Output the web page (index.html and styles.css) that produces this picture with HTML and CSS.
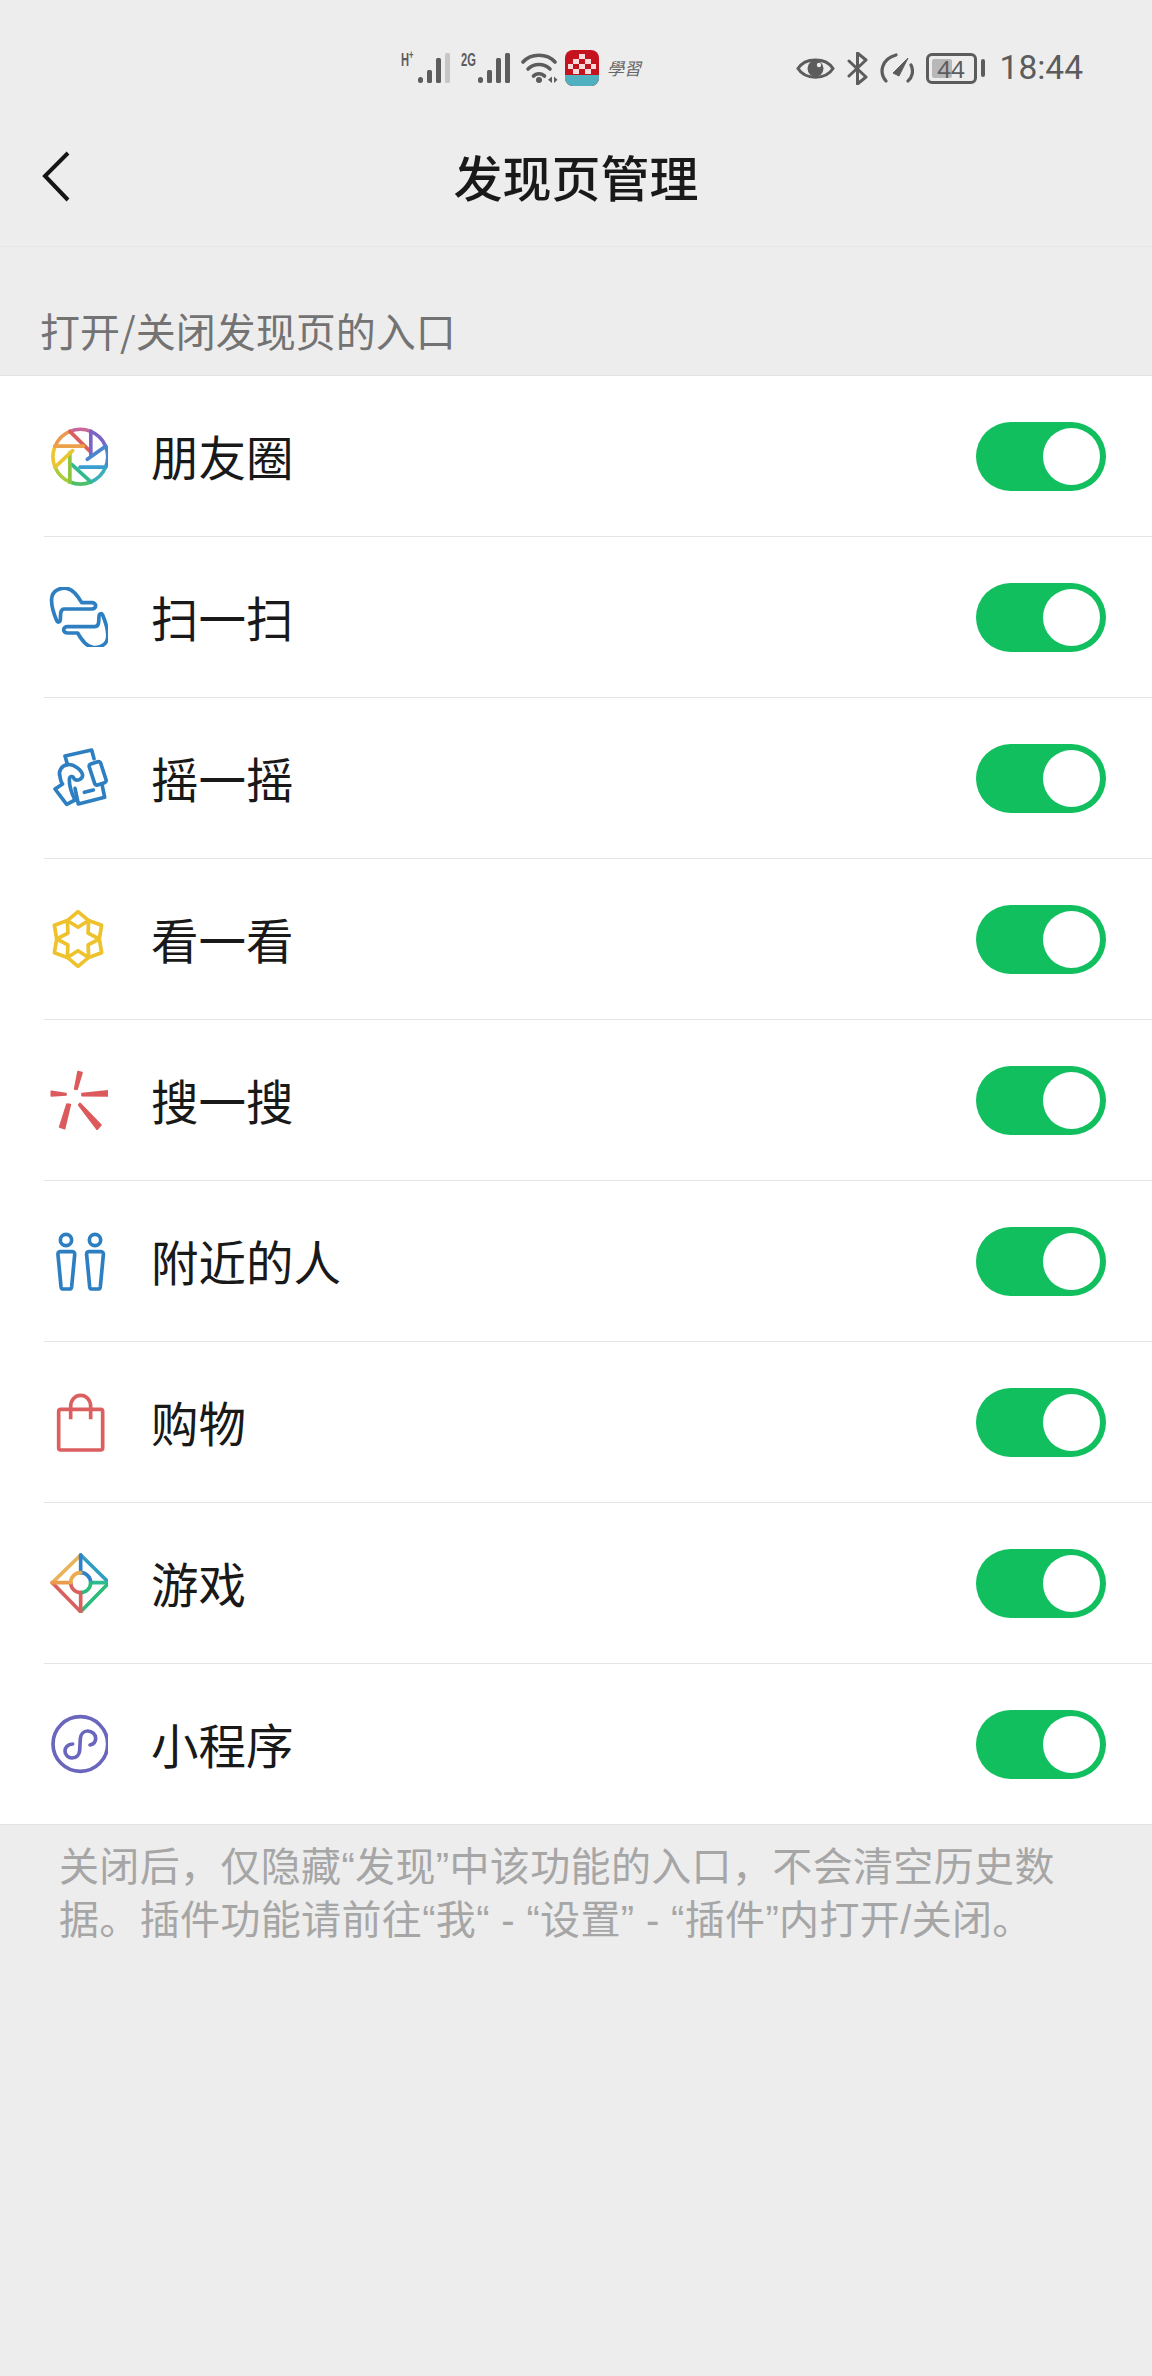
FILE: index.html
```html
<!DOCTYPE html>
<html lang="zh-CN">
<head>
    <meta charset="UTF-8">
    <meta name="viewport" content="width=device-width, initial-scale=1.0">
    <title>发现页管理</title>
    <link rel="stylesheet" href="styles.css">
</head>
<body>

<div class="status-bar">
    <div class="status-center">
        <div class="signal">
            <span class="net">H<sup>+</sup></span>
            <svg width="32" height="30" viewBox="0 0 32 30"><g fill="#5c5c5c"><rect x="0" y="24" width="5" height="6" rx="2.500"/><rect x="9" y="17" width="5" height="13" rx="1.500"/><rect x="18" y="5" width="5" height="25" rx="1.500"/></g><rect x="27" y="0" width="5" height="30" rx="1.500" fill="#c6c6c6"/></svg>
        </div>
        <div class="signal">
            <span class="net">2G</span>
            <svg width="32" height="30" viewBox="0 0 32 30"><g fill="#5c5c5c"><rect x="0" y="24" width="5" height="6" rx="2.500"/><rect x="9" y="17" width="5" height="13" rx="1.500"/><rect x="18" y="5" width="5" height="25" rx="1.500"/><rect x="27" y="0" width="5" height="30" rx="1.500"/></g></svg>
        </div>
        <svg class="wifi" width="37" height="30" viewBox="0 0 37 30"><g fill="none" stroke="#5c5c5c" stroke-width="3.600" stroke-linecap="round"><path d="M2 9C10 0 26 0 34 9"/><path d="M7 16C13 10 23 10 29 16"/><path d="M12.500 23C15 20 21 20 23.500 23"/></g><circle cx="18" cy="27" r="3" fill="#5c5c5c"/><path d="M31 23.500v6.500l-4-3.200zM33 23.500l3.500 3.300-3.500 3.200z" fill="#5c5c5c"/></svg>
        <svg class="app-badge" width="34" height="36" viewBox="0 0 34 36">
            <rect width="34" height="36" rx="8" fill="#c4121f"/>
            <path d="M0 25h34v3a8 8 0 0 1-8 8H8a8 8 0 0 1-8-8z" fill="#4fb0c0"/>
            <g fill="#f8dcdc"><rect x="14" y="4" width="6" height="5"/><rect x="8" y="9" width="6" height="5"/><rect x="20" y="9" width="6" height="5"/><rect x="3" y="14" width="5" height="5"/><rect x="14" y="14" width="6" height="5"/><rect x="26" y="14" width="5" height="5"/><rect x="8" y="19" width="6" height="5"/><rect x="20" y="19" width="6" height="5"/></g>
        </svg>
        <span class="study">學習</span>
    </div>
    <div class="status-right">
        <svg width="39" height="25" viewBox="0 0 39 25"><path d="M2 12.500C9 1 30 1 37 12.500C30 24 9 24 2 12.500Z" fill="none" stroke="#5c5c5c" stroke-width="3"/><circle cx="19.500" cy="12.500" r="8" fill="#5c5c5c"/><circle cx="23" cy="9" r="2.200" fill="#ededed"/></svg>
        <svg width="21" height="33" viewBox="0 0 21 33"><path d="M2 9L19 25L10.500 32V1L19 8L2 24" fill="none" stroke="#5c5c5c" stroke-width="3" stroke-linejoin="round" stroke-linecap="round"/></svg>
        <svg width="34" height="30" viewBox="0 0 34 30"><g fill="none" stroke="#5c5c5c" stroke-width="3.200" stroke-linecap="round"><path d="M6 28C-1 20 1 6 16 2"/><path d="M31 12C34 18 32 25 28 28"/></g><path d="M13 20L17 16L28 5L19 23Z" fill="#5c5c5c" stroke="#5c5c5c" stroke-linejoin="round"/></svg>
        <div class="battery">
            <div class="battery-body"><div class="battery-level"></div><span class="battery-num">44</span></div>
            <div class="battery-cap"></div>
        </div>
        <span class="clock">18:44</span>
    </div>
</div>

<header class="nav-bar">
    <svg class="back" width="28" height="52" viewBox="0 0 28 52"><path d="M26 2L3 25L26 49" fill="none" stroke="#151515" stroke-width="4"/></svg>
    <h1>发现页管理</h1>
</header>

<div class="section-title">打开/关闭发现页的入口</div>

<ul class="entry-list">
    <li class="entry">
        <svg class="entry-icon" viewBox="54 888 180 180" fill="none" stroke-width="11" stroke-linecap="round">
            <path d="M119.600 904.200A82 82 0 0 1 182.400 904.200" stroke="#c7679a"/>
            <path d="M182.400 904.200A82 82 0 0 1 226.800 948.600" stroke="#7a66c4"/>
            <path d="M226.800 948.600A82 82 0 0 1 226.800 1011.400" stroke="#4a86cf"/>
            <path d="M226.800 1011.400A82 82 0 0 1 182.400 1055.800" stroke="#38b0b8"/>
            <path d="M182.400 1055.800A82 82 0 0 1 119.600 1055.800" stroke="#4fc06a"/>
            <path d="M119.600 1055.800A82 82 0 0 1 75.200 1011.400" stroke="#a9cc3a"/>
            <path d="M75.200 1011.400A82 82 0 0 1 75.200 948.600" stroke="#ecc531"/>
            <path d="M75.200 948.600A82 82 0 0 1 119.600 904.200" stroke="#ec9a4f"/>
            <path d="M119.600 904.200L178 962" stroke="#d9605f"/>
            <path d="M182.400 904.200V975" stroke="#7a66c4"/>
            <path d="M226.800 948.600L172 988" stroke="#4a86cf"/>
            <path d="M226.800 1011.400H150" stroke="#3a9fd0"/>
            <path d="M182.400 1055.800L125 1003" stroke="#2fbb8f"/>
            <path d="M119.600 1055.800V968" stroke="#8cc63f"/>
            <path d="M75.200 1011.400L128 962" stroke="#e8c531"/>
            <path d="M75.200 948.600H160" stroke="#eda04a"/>
        </svg>
        <span class="entry-name">朋友圈</span>
        <div class="switch"><div class="knob"></div></div>
    </li>
    <li class="entry">
        <svg class="entry-icon" viewBox="39 51 180 180" fill="none" stroke="#2d7fc1" stroke-width="11" stroke-linejoin="round">
            <path d="M65 152C58 135 48 105 50 85C52 62 75 52 95 55C115 58 130 80 140 98H170C186 98 186 117 170 117H88C80 117 78 122 77 130L76 148C75 158 68 158 65 152Z"/>
            <path transform="rotate(180 134 143.500)" d="M65 152C58 135 48 105 50 85C52 62 75 52 95 55C115 58 130 80 140 98H170C186 98 186 117 170 117H88C80 117 78 122 77 130L76 148C75 158 68 158 65 152Z"/>
        </svg>
        <span class="entry-name">扫一扫</span>
        <div class="switch"><div class="knob"></div></div>
    </li>
    <li class="entry">
        <svg class="entry-icon" viewBox="54 84 180 180" fill="none" stroke="#2d7fc1" stroke-width="11" stroke-linejoin="round" stroke-linecap="round">
            <path d="M112 132L105 108L185 90L192 116"/>
            <path d="M135 205L145 252L224 232L217 198"/>
            <path d="M163 217L190 210"/>
            <rect x="185" y="127" width="36" height="66" rx="7" transform="rotate(-18 203 160)"/>
            <path d="M112 134C92 138 85 155 90 170C92 182 95 190 98 192L75 207L110 253L135 240"/>
            <path d="M135 240C125 220 118 195 118 180C118 168 128 166 132 176C140 185 158 178 158 165C155 150 130 130 112 134"/>
        </svg>
        <span class="entry-name">摇一摇</span>
        <div class="switch"><div class="knob"></div></div>
    </li>
    <li class="entry">
        <svg class="entry-icon" viewBox="0 0 60 60" fill="none" stroke="#eec22c" stroke-width="3.700" stroke-linejoin="round">
            <path d="M30 2.700L40.650 11.550L53.600 16.350L51.300 30L53.600 43.650L40.650 48.450L30 57.300L19.350 48.450L6.400 43.650L8.700 30L6.400 16.350L19.350 11.550Z"/>
            <path d="M19.350 11.550L30 18.300L40.650 11.550L40.100 24.150L51.300 30L40.100 35.850L40.650 48.450L30 41.700L19.350 48.450L19.900 35.850L8.700 30L19.900 24.150Z"/>
        </svg>
        <span class="entry-name">看一看</span>
        <div class="switch"><div class="knob"></div></div>
    </li>
    <li class="entry">
        <svg class="entry-icon" viewBox="54 90 180 180" fill="#dc5a5c" stroke="#dc5a5c" stroke-width="5" stroke-linejoin="round">
            <path d="M144 95L156 98L141 148L134 147Z"/>
            <path d="M64 154L108 161L108 165L64 168Z"/>
            <path d="M156 161L240 152L241 168L156 167Z"/>
            <path d="M111 192L121 194L104 266L89 261Z"/>
            <path d="M150 190L213 255L201 268L146 195Z"/>
        </svg>
        <span class="entry-name">搜一搜</span>
        <div class="switch"><div class="knob"></div></div>
    </li>
    <li class="entry">
        <svg class="entry-icon" viewBox="54 63 180 180" fill="none" stroke="#2d7fc1" stroke-width="11" stroke-linejoin="round">
            <circle cx="108" cy="90" r="17"/>
            <circle cx="195" cy="90" r="17"/>
            <path d="M90 125H127Q135 125 134 135L125 230Q124 237 118 237H100Q94 237 93 230L84 135Q83 125 90 125Z"/>
            <path d="M176 125H213Q221 125 220 135L211 230Q210 237 204 237H186Q180 237 179 230L170 135Q169 125 176 125Z"/>
        </svg>
        <span class="entry-name">附近的人</span>
        <div class="switch"><div class="knob"></div></div>
    </li>
    <li class="entry">
        <svg class="entry-icon" viewBox="54 546 180 180" fill="none" stroke="#dc5f60" stroke-width="11" stroke-linejoin="round">
            <rect x="86" y="598" width="132" height="122" rx="6"/>
            <path d="M122 628V590C122 545 182 545 182 590V628"/>
        </svg>
        <span class="entry-name">购物</span>
        <div class="switch"><div class="knob"></div></div>
    </li>
    <li class="entry">
        <svg class="entry-icon" viewBox="39 39 180 180" fill="none" stroke-width="11" stroke-linecap="round" stroke-linejoin="round">
            <path d="M137 45L52 128" stroke="#e9b35c"/>
            <path d="M137 45L222 128" stroke="#2f9ec0"/>
            <path d="M222 128L137 215" stroke="#2dbb7a"/>
            <path d="M137 215L52 128" stroke="#d9605f"/>
            <path d="M137 45V98" stroke="#2f80c8"/>
            <path d="M167 128H222" stroke="#2dbb90"/>
            <path d="M137 158V215" stroke="#d9605f"/>
            <path d="M52 128H107" stroke="#ec9a4a"/>
            <path d="M137 98A30 30 0 0 1 167 128" stroke="#2f80c8"/>
            <path d="M167 128A30 30 0 0 1 137 158" stroke="#2dbb7a"/>
            <path d="M137 158A30 30 0 0 1 107 128" stroke="#d9605f"/>
            <path d="M107 128A30 30 0 0 1 137 98" stroke="#ecaa4a"/>
        </svg>
        <span class="entry-name">游戏</span>
        <div class="switch"><div class="knob"></div></div>
    </li>
    <li class="entry">
        <svg class="entry-icon" viewBox="54 102 180 180" fill="none" stroke="#6a66bd" stroke-width="11" stroke-linecap="round">
            <circle cx="151" cy="192" r="82"/>
            <path d="M128 192C113 192 105 203 105 213C105 225 115 234 126 234C139 234 148 224 149 212L151 176C152 163 161 153 173 153C186 153 197 163 197 175C197 186 190 193 180 195"/>
        </svg>
        <span class="entry-name">小程序</span>
        <div class="switch"><div class="knob"></div></div>
    </li>
</ul>

<p class="footnote">关闭后，仅隐藏“发现”中该功能的入口，不会清空历史数据。插件功能请前往“我“ - “设置” - “插件”内打开/关闭。</p>

</body>
</html>
```

FILE: styles.css
```css
* {
    box-sizing: border-box;
}

html, body {
    margin: 0;
    padding: 0;
}

body {
    width: 1152px;
    height: 2376px;
    overflow: hidden;
    background-color: #ededed;
    font-family: "Noto Sans CJK SC", "Noto Sans", sans-serif;
    color: #191919;
}

/* status bar */
.status-bar {
    height: 116px;
    padding: 46px 69px 0 401px;
    display: flex;
    justify-content: space-between;
    align-items: flex-start;
}

.status-center {
    display: flex;
    align-items: center;
    gap: 11px;
    height: 44px;
}

.signal {
    display: flex;
    width: 49px;
    height: 30px;
}

.net {
    font-family: "Liberation Sans", sans-serif;
    font-weight: bold;
    font-size: 18px;
    line-height: 15px;
    color: #5c5c5c;
    width: 17px;
    transform: scaleX(0.62);
    transform-origin: left top;
    white-space: nowrap;
}

.net sup {
    font-size: 12px;
    line-height: 0;
}

.app-badge {
    margin-left: -4px;
}

.study {
    font-family: "Noto Sans CJK TC", sans-serif;
    font-style: italic;
    font-size: 17px;
    line-height: 22px;
    color: #666;
    margin-left: -3px;
}

.status-right {
    display: flex;
    align-items: center;
    gap: 12px;
    height: 44px;
}

.battery {
    display: flex;
    align-items: center;
    gap: 4px;
}

.battery-body {
    width: 51px;
    height: 31px;
    border: 3px solid #5c5c5c;
    border-radius: 6px;
    padding: 3px;
    position: relative;
    display: flex;
}

.battery-level {
    width: 20px;
    background-color: #b8b8b8;
    border-radius: 2px;
}

.battery-num {
    position: absolute;
    left: 0;
    right: 0;
    top: 0;
    text-align: center;
    font-family: "Noto Sans", sans-serif;
    font-size: 24px;
    line-height: 25px;
    color: #5c5c5c;
}

.battery-cap {
    width: 4px;
    height: 18px;
    background-color: #5c5c5c;
    border-radius: 2px;
}

.clock {
    font-family: Roboto, sans-serif;
    font-size: 33.500px;
    line-height: 44px;
    color: #5c5c5c;
    margin-left: 3px;
}

/* nav */
.nav-bar {
    height: 131px;
    display: flex;
    align-items: center;
    justify-content: center;
    position: relative;
    border-bottom: 1px solid #e6e6e6;
    padding-bottom: 11px;
}

.back {
    position: absolute;
    left: 42px;
    top: 35px;
}

.nav-bar h1 {
    margin: 0;
    font-size: 49px;
    font-weight: 500;
    line-height: 64px;
    color: #191919;
}

.section-title {
    height: 129px;
    padding: 56px 0 0 40px;
    font-size: 40px;
    line-height: 54px;
    color: #737373;
    border-bottom: 1px solid #e4e4e4;
}

/* entries */
.entry-list {
    list-style: none;
    margin: 0;
    padding: 0;
    background-color: #fff;
    border-bottom: 1px solid #e4e4e4;
}

.entry {
    height: 161px;
    margin-left: 44px;
    padding-right: 46px;
    display: flex;
    align-items: center;
    border-bottom: 1px solid #e5e5e5;
}

.entry:last-child {
    border-bottom: none;
    height: 160px;
}

.entry-icon {
    width: 60px;
    height: 60px;
    margin: 0 43px 0 4px;
    flex-shrink: 0;
}

.entry-name {
    flex: 1;
    font-size: 47.500px;
    line-height: 64px;
    color: #191919;
}

.switch {
    width: 130px;
    height: 69px;
    padding: 6px;
    background-color: #11bf5e;
    border-radius: 35px;
    display: flex;
    justify-content: flex-end;
}

.knob {
    width: 57px;
    height: 57px;
    background-color: #fff;
    border-radius: 50%;
}

.footnote {
    width: 1012px;
    margin: 16px 0 0 59px;
    font-family: "Liberation Sans", "Noto Sans CJK SC", sans-serif;
    font-size: 40px;
    line-height: 53px;
    letter-spacing: 0.350px;
    color: #a6a6a6;
}
```
